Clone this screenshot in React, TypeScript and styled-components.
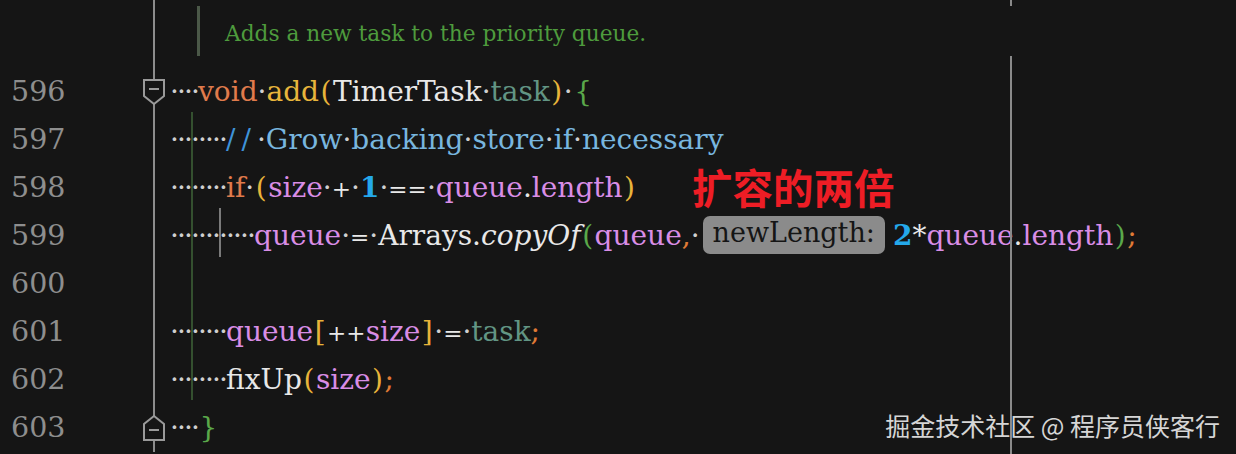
import React from "react";
import styled, { createGlobalStyle } from "styled-components";

const GlobalStyle = createGlobalStyle`
  html, body { margin: 0; padding: 0; background: #151515; }
  body { width: 1236px; height: 454px; overflow: hidden; }
`;

type Kind =
  | "kw" | "fn" | "pl" | "op" | "param" | "field" | "num" | "cm" | "slash"
  | "punct" | "yel" | "grn" | "ws" | "italic" | "hint";

const colors: Record<Kind, string> = {
  kw: "#e07b4c",
  fn: "#e8b53c",
  pl: "#e8e8e8",
  op: "#e8e8e8",
  param: "#629584",
  field: "#d98de6",
  num: "#24a8ea",
  cm: "#78b6df",
  slash: "#3f93d8",
  punct: "#e07a35",
  yel: "#e8b43a",
  grn: "#5aa84a",
  ws: "#cfcfcf",
  italic: "#e8e8e8",
  hint: "#151515",
};

type Tok = [string, Kind];

interface LineSpec {
  n: number;
  fold?: "down" | "up";
  ind: number;
  toks: Tok[];
  guides?: { x: number; c: string }[];
}

const GREEN_GUIDE = { x: 23, c: "#34502f" };
const GRAY_GUIDE = { x: 51, c: "#7a7a7a" };

const S: Tok = [" ", "ws"];

const lines: LineSpec[] = [
  {
    n: 596, fold: "down", ind: 4,
    toks: [["void", "kw"], S, ["add", "fn"], ["(", "yel"], ["TimerTask", "pl"], S, ["task", "param"], [")", "yel"], S, ["{", "grn"]],
  },
  {
    n: 597, ind: 8, guides: [GREEN_GUIDE],
    toks: [["//", "slash"], S, ["Grow", "cm"], S, ["backing", "cm"], S, ["store", "cm"], S, ["if", "cm"], S, ["necessary", "cm"]],
  },
  {
    n: 598, ind: 8, guides: [GREEN_GUIDE],
    toks: [["if", "kw"], S, ["(", "yel"], ["size", "field"], S, ["+", "op"], S, ["1", "num"], S, ["==", "op"], S, ["queue", "field"], [".", "pl"], ["length", "field"], [")", "yel"]],
  },
  {
    n: 599, ind: 12, guides: [GREEN_GUIDE, GRAY_GUIDE],
    toks: [["queue", "field"], S, ["=", "op"], S, ["Arrays.", "pl"], ["copyOf", "italic"], ["(", "grn"], ["queue", "field"], [",", "punct"], S, ["newLength:", "hint"], ["2", "num"], ["*", "pl"], ["queue", "field"], [".", "pl"], ["length", "field"], [")", "grn"], [";", "punct"]],
  },
  { n: 600, ind: 0, guides: [GREEN_GUIDE], toks: [] },
  {
    n: 601, ind: 8, guides: [GREEN_GUIDE],
    toks: [["queue", "field"], ["[", "yel"], ["++", "op"], ["size", "field"], ["]", "yel"], S, ["=", "op"], S, ["task", "param"], [";", "punct"]],
  },
  {
    n: 602, ind: 8, guides: [GREEN_GUIDE],
    toks: [["fixUp", "pl"], ["(", "yel"], ["size", "field"], [")", "yel"], [";", "punct"]],
  },
  { n: 603, fold: "up", ind: 4, toks: [["}", "grn"]] },
];

const Editor = styled.div`
  position: relative;
  width: 1236px;
  height: 454px;
  overflow: hidden;
  background: #151515;
  font-family: "DejaVu Serif", serif;
`;

const Row = styled.div<{ $h: number }>`
  display: grid;
  grid-template-columns: 140px 28px 1fr;
  height: ${(p) => p.$h}px;
`;

const LineNo = styled.div`
  padding-left: 11px;
  font-size: 28.5px;
  line-height: 48px;
  color: #8e8e8e;
`;

const FoldCell = styled.div`
  position: relative;
  display: flex;
  align-items: center;
  justify-content: center;
  &::before {
    content: "";
    position: absolute;
    left: 13px;
    top: 0;
    bottom: 0;
    width: 2px;
    background: #8c8c8c;
  }
`;

const FoldSvg = styled.svg`
  position: relative;
  z-index: 1;
`;

const Code = styled.div`
  position: relative;
  padding-left: 2px;
  font-size: 28px;
  line-height: 48px;
  white-space: pre;
  color: #e8e8e8;
`;

const Guide = styled.span<{ $x: number; $c: string }>`
  position: absolute;
  left: ${(p) => p.$x}px;
  top: -4px;
  bottom: 4px;
  width: 2px;
  background: ${(p) => p.$c};
`;

const Indent = styled.span`
  color: #cfcfcf;
  letter-spacing: -1.9px;
`;

const Token = styled.span<{ $kind: Kind }>`
  color: ${(p) => colors[p.$kind]};
  font-weight: ${(p) => (p.$kind === "num" ? 700 : 400)};
  font-style: ${(p) => (p.$kind === "italic" ? "italic" : "normal")};
  font-size: ${(p) => (p.$kind === "op" ? "23px" : "inherit")};
  letter-spacing: ${(p) => (p.$kind === "slash" ? "6px" : "normal")};
  padding: ${(p) => (p.$kind === "yel" || p.$kind === "grn" ? "0 1.5px" : "0")};
`;

const Hint = styled.span`
  display: inline-block;
  background: #8b8b8b;
  color: #151515;
  border-radius: 7px;
  font-size: 27px;
  height: 38px;
  line-height: 34px;
  padding: 0 10px;
  margin: 0 8px 0 3px;
  box-sizing: border-box;
  vertical-align: 3px;
`;

const DocBlock = styled.div`
  position: relative;
  z-index: 2;
  margin: 6px 0 0 27px;
  height: 50px;
  box-sizing: border-box;
  border-left: 3px solid #4b5848;
  padding: 14px 0 0 25px;
  font-size: 21.7px;
  line-height: 28px;
  color: #4e9b3d;
  background: #151515;
`;

const MarginLine = styled.div`
  position: absolute;
  left: 1010px;
  top: 0;
  bottom: 0;
  width: 2px;
  background: #8a8a8a;
  z-index: 1;
`;

const Annotation = styled.div`
  position: absolute;
  left: 692px;
  top: 163px;
  font-family: "Noto Sans CJK SC", sans-serif;
  font-weight: 700;
  font-size: 40.5px;
  line-height: 48px;
  color: #ee1d25;
  z-index: 3;
`;

const Watermark = styled.div`
  position: absolute;
  right: 16px;
  bottom: 12px;
  font-family: "Noto Sans CJK SC", sans-serif;
  font-size: 25px;
  line-height: 34px;
  color: #d6d6d6;
  z-index: 3;
`;

const FoldIcon: React.FC<{ dir: "down" | "up" }> = ({ dir }) => (
  <FoldSvg width="24" height="28" viewBox="0 0 24 28">
    {dir === "down" ? (
      <>
        <path d="M2 2 H22 V18 L12 26 L2 18 Z" fill="#151515" stroke="#9a9a9a" strokeWidth="2" />
        <path d="M7 11 H17" stroke="#9a9a9a" strokeWidth="2" />
      </>
    ) : (
      <>
        <path d="M2 26 H22 V10 L12 2 L2 10 Z" fill="#151515" stroke="#9a9a9a" strokeWidth="2" />
        <path d="M7 16 H17" stroke="#9a9a9a" strokeWidth="2" />
      </>
    )}
  </FoldSvg>
);

const renderTok = (tok: Tok, i: number) => {
  const [t, k] = tok;
  if (k === "ws") return <Token key={i} $kind="ws">·</Token>;
  if (k === "hint") return <Hint key={i}>{t}</Hint>;
  return <Token key={i} $kind={k}>{t}</Token>;
};

export default function App() {
  return (
    <>
      <GlobalStyle />
      <Editor>
        <Row $h={68}>
          <LineNo />
          <FoldCell />
          <Code>
            <DocBlock>Adds a new task to the priority queue.</DocBlock>
          </Code>
        </Row>
        {lines.map((l) => (
          <Row key={l.n} $h={48}>
            <LineNo>{l.n}</LineNo>
            <FoldCell>{l.fold && <FoldIcon dir={l.fold} />}</FoldCell>
            <Code>
              {l.guides?.map((g, i) => <Guide key={i} $x={g.x} $c={g.c} />)}
              {l.ind > 0 && <Indent>{"·".repeat(l.ind)}</Indent>}
              {l.toks.map(renderTok)}
            </Code>
          </Row>
        ))}
        <MarginLine />
        <Annotation>扩容的两倍</Annotation>
        <Watermark>掘金技术社区 @ 程序员侠客行</Watermark>
      </Editor>
    </>
  );
}
